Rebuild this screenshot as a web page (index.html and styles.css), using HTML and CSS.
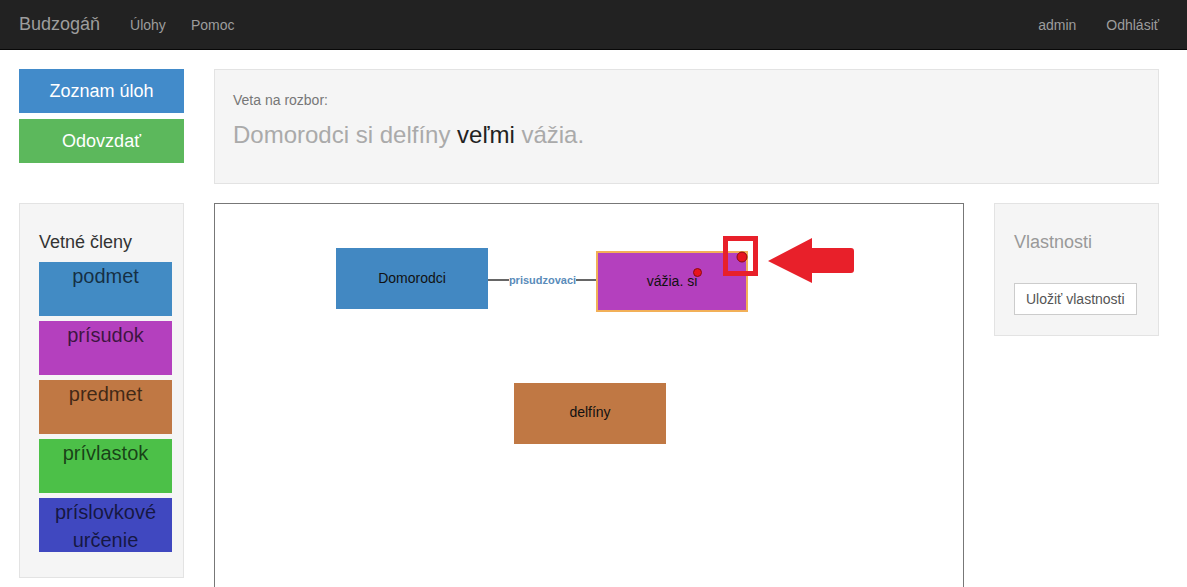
FILE: index.html
```html
<!DOCTYPE html>
<html lang="sk">
<head>
<meta charset="utf-8">
<title>Budzogáň</title>
<link rel="stylesheet" href="styles.css">
</head>
<body>
<nav class="navbar">
  <div class="nav-left">
    <a class="brand">Budzogáň</a>
    <a class="nav-link">Úlohy</a>
    <a class="nav-link">Pomoc</a>
  </div>
  <div class="nav-right">
    <a class="nav-link">admin</a>
    <a class="nav-link">Odhlásiť</a>
  </div>
</nav>

<main class="page">
  <section class="row row-top">
    <div class="side">
      <button class="btn btn-blue">Zoznam úloh</button>
      <button class="btn btn-green">Odovzdať</button>
    </div>
    <div class="well sentence-well">
      <p class="label">Veta na rozbor:</p>
      <p class="sentence">Domorodci si delfíny <span class="hl">veľmi</span> vážia.</p>
    </div>
  </section>

  <section class="row row-main">
    <div class="well members">
      <h4 class="well-title">Vetné členy</h4>
      <ul class="member-list">
        <li class="member m-podmet">podmet</li>
        <li class="member m-prisudok">prísudok</li>
        <li class="member m-predmet">predmet</li>
        <li class="member m-privlastok">prívlastok</li>
        <li class="member m-prislovkove">príslovkové určenie</li>
      </ul>
    </div>

    <div class="canvas">
      <svg class="diagram" width="748" height="420" viewBox="0 0 748 420" xmlns="http://www.w3.org/2000/svg">
        <line x1="273" y1="76" x2="382" y2="76" stroke="#666" stroke-width="2"/>
        <rect x="294" y="69" width="67" height="14" fill="#fff"/>
        <text x="327.5" y="80" text-anchor="middle" class="edge-label">prisudzovaci</text>

        <rect x="121" y="44" width="152" height="61" fill="#4288c2"/>
        <text x="197" y="79" text-anchor="middle" class="node-text">Domorodci</text>

        <rect x="382" y="48" width="150" height="59" fill="#b440be" stroke="#f2b058" stroke-width="2"/>
        <text x="457" y="82" text-anchor="middle" class="node-text">vážia. si</text>
        <circle cx="482.5" cy="68.5" r="4" fill="#e8141e" stroke="#8a0a10" stroke-width="1"/>
        <circle cx="527" cy="53" r="5" fill="#e8141e" stroke="#8a0a10" stroke-width="1"/>

        <rect x="299" y="179" width="152" height="61" fill="#c07844"/>
        <text x="375" y="213" text-anchor="middle" class="node-text">delfíny</text>

        <rect x="510.5" y="34.5" width="30" height="35" fill="none" stroke="#e8202a" stroke-width="5"/>
        <path d="M553 57 L597 34 L597 44 L636 44 Q639 44 639 47 L639 66 Q639 69 636 69 L597 69 L597 79 Z" fill="#e8202a"/>
      </svg>
    </div>

    <div class="well props">
      <h4 class="well-title muted">Vlastnosti</h4>
      <button class="btn-default">Uložiť vlastnosti</button>
    </div>
  </section>
</main>
</body>
</html>
```

FILE: styles.css
```css
* { box-sizing: border-box; }
html, body { margin: 0; padding: 0; }
body {
  font-family: "Liberation Sans", Arial, sans-serif;
  font-size: 14px;
  color: #333;
  background: #fff;
  overflow: hidden;
}

.navbar {
  height: 50px;
  background: #222;
  border-bottom: 1px solid #080808;
  display: flex;
  justify-content: space-between;
  align-items: center;
  padding: 0 28px 0 19px;
}
.nav-left, .nav-right { display: flex; align-items: center; }
.brand {
  font-size: 18px;
  color: #9d9d9d;
  margin-right: 30px;
}
.nav-link {
  font-size: 14px;
  color: #9d9d9d;
  margin-right: 25px;
}
.nav-right .nav-link { margin-right: 0; margin-left: 30px; }

.page { padding: 19px 0 0 19px; }
.row { display: flex; gap: 30px; align-items: flex-start; }
.row-top { margin-bottom: 19px; }

.side { width: 165px; display: flex; flex-direction: column; gap: 6px; }
.btn {
  display: block;
  width: 165px;
  height: 44px;
  border: 0;
  font-family: inherit;
  font-size: 18px;
  color: #fff;
  padding: 0;
  margin: 0;
  line-height: 44px;
}
.btn-blue { background: #428bca; }
.btn-green { background: #5cb85c; }

.well {
  background: #f5f5f5;
  border: 1px solid #e3e3e3;
}
.sentence-well {
  width: 945px;
  height: 115px;
  padding: 19px 18px;
}
.label {
  margin: 1px 0 0;
  font-size: 14px;
  line-height: 20px;
  color: #777;
}
.sentence {
  margin: 8px 0 0;
  font-size: 24px;
  line-height: 34px;
  color: #aaa;
}
.sentence .hl { color: #222; }

.members {
  width: 165px;
  height: 375px;
  padding: 18px 11px 19px 19px;
}
.well-title {
  margin: 10px 0 10px;
  font-size: 18px;
  font-weight: normal;
  line-height: 20px;
  color: #333;
}
.well-title.muted { color: #999; }
.member-list {
  list-style: none;
  margin: 0;
  padding: 0;
  display: flex;
  flex-direction: column;
  gap: 5px;
}
.member {
  width: 133px;
  height: 54px;
  font-size: 20px;
  line-height: 28px;
  text-align: center;
  color: rgba(0, 0, 0, 0.68);
}
.m-podmet { background: #428bc4; }
.m-prisudok { background: #b440be; }
.m-predmet { background: #c07844; }
.m-privlastok { background: #4cc048; }
.m-prislovkove { background: #4048c0; }

.canvas {
  width: 750px;
  height: 420px;
  border: 1px solid #777;
  background: #fff;
}
.diagram { display: block; }
.node-text {
  font-family: "Liberation Sans", Arial, sans-serif;
  font-size: 14px;
  fill: #111;
}
.edge-label {
  font-family: "Liberation Sans", Arial, sans-serif;
  font-size: 11px;
  font-weight: bold;
  fill: #5a8cba;
}

.props {
  width: 165px;
  height: 133px;
  padding: 18px 19px 19px;
}
.btn-default {
  margin-top: 21px;
  height: 32px;
  padding: 0 11px;
  background: #fff;
  border: 1px solid #ccc;
  font-family: inherit;
  font-size: 14px;
  color: #555;
}
```
